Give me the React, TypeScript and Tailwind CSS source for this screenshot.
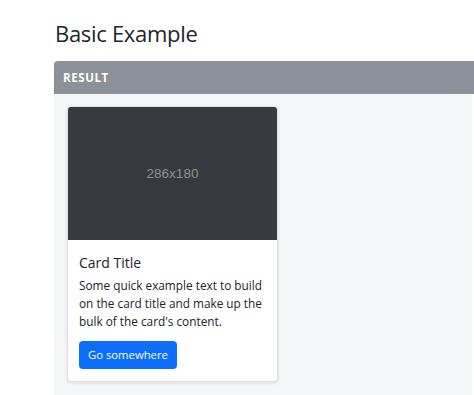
import React from "react";

export default function App() {
  return (
    <div className="w-[474px] h-[395px] overflow-hidden bg-white text-[#212529]" style={{ fontFamily: '"Open Sans", "Noto Sans", sans-serif' }}>
      <div className="pl-[54px] pt-[18px]">
        <h2 className="text-[22px] leading-[30px] font-normal tracking-[-0.3px] text-[#212529] mb-[13px] ml-[1px]">Basic Example</h2>
        <div className="w-[420px]">
          <div className="h-[33px] bg-[#8b9099] rounded-tl-[4px] flex items-center pl-[9px]">
            <span className="text-[11.5px] font-bold tracking-[0.6px] text-white">RESULT</span>
          </div>
          <div className="bg-[#f5f6f8] h-[320px] pl-[13px] pt-[12px] mr-[2px]">
            <div className="w-[211px] bg-white rounded-[4px] border border-[#dfe1e4] shadow-[0_1px_3px_rgba(0,0,0,0.12)] overflow-hidden">
              <div className="h-[133px] bg-[#373a40] flex items-center justify-center pt-[1px]">
                <span className="text-[13.5px] text-[#8f9196]" style={{ fontFamily: '"Liberation Sans", Arial, sans-serif' }}>286x180</span>
              </div>
              <div className="px-[11px] pt-[14px] pb-[12px]">
                <div className="text-[14px] leading-[18px] mb-[4px]">Card Title</div>
                <p className="text-[11.8px] leading-[18px] text-[#212529] mb-[11px]">
                  Some quick example text to build on the card title and make up the bulk of the card's content.
                </p>
                <button className="bg-[#0d6efd] text-white text-[11.3px] leading-[18px] px-[9px] py-[5px] rounded-[4px]">Go somewhere</button>
              </div>
            </div>
          </div>
        </div>
      </div>
    </div>
  );
}
